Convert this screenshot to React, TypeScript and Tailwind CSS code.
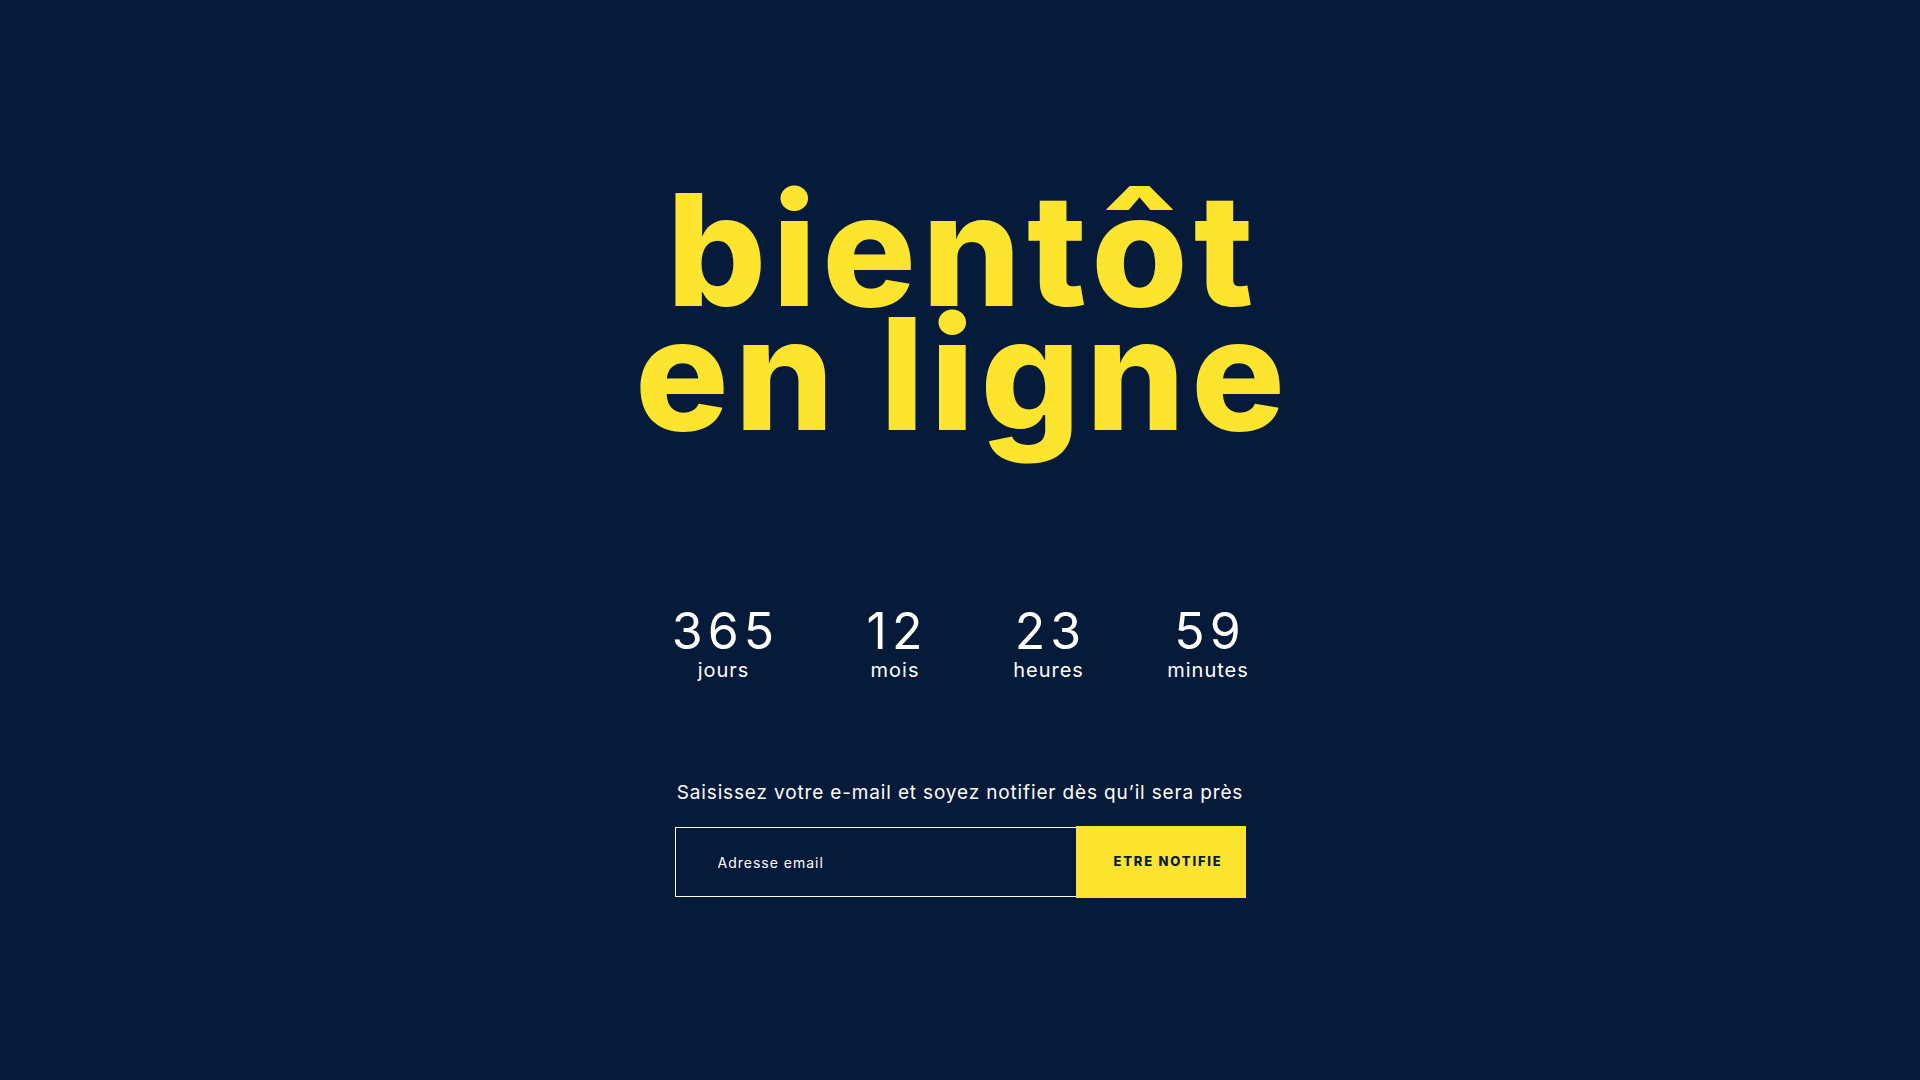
export default function App() {
  return (
    <main className="min-h-screen w-full bg-[#061a3a] font-['Inter',sans-serif] flex flex-col items-center pt-[188px]">
      <h1 className="pl-[6px] text-[156px] leading-[124px] font-extrabold tracking-[6px] text-[#fde42f] text-center">
        <span className="block">bientôt</span>
        <span className="block">en ligne</span>
      </h1>

      <div className="mt-[170px] flex flex-row text-white">
        <div className="w-[105px] flex flex-col items-center">
          <span className="pl-[5px] text-[50px] leading-[50px] font-normal tracking-[5px] whitespace-nowrap">365</span>
          <span className="mt-[4px] pl-[1px] text-[20px] leading-[20px] tracking-[1px] whitespace-nowrap">jours</span>
        </div>
        <div className="ml-[91px] w-[56px] flex flex-col items-center">
          <span className="pl-[5px] text-[50px] leading-[50px] font-normal tracking-[5px] whitespace-nowrap">12</span>
          <span className="mt-[4px] pl-[1px] text-[20px] leading-[20px] tracking-[1px] whitespace-nowrap">mois</span>
        </div>
        <div className="ml-[91px] w-[69px] flex flex-col items-center">
          <span className="pl-[5px] text-[50px] leading-[50px] font-normal tracking-[5px] whitespace-nowrap">23</span>
          <span className="mt-[4px] pl-[1px] text-[20px] leading-[20px] tracking-[1px] whitespace-nowrap">heures</span>
        </div>
        <div className="ml-[83px] w-[84px] flex flex-col items-center">
          <span className="pl-[5px] text-[50px] leading-[50px] font-normal tracking-[5px] whitespace-nowrap">59</span>
          <span className="mt-[4px] pl-[1px] text-[20px] leading-[20px] tracking-[1px] whitespace-nowrap">minutes</span>
        </div>
      </div>

      <p className="mt-[101px] text-[19px] leading-[24px] tracking-[0.85px] text-white whitespace-nowrap">
        Saisissez votre e-mail et soyez notifier dès qu’il sera près
      </p>

      <form className="mt-[21px] flex flex-row items-center" onSubmit={(e) => e.preventDefault()}>
        <input
          type="email"
          placeholder="Adresse email"
          className="w-[401px] h-[70px] border border-r-0 border-white bg-transparent pl-[42px] text-[14px] tracking-[1px] text-white placeholder:text-white outline-none"
        />
        <button
          type="submit"
          className="w-[170px] h-[72px] bg-[#fde42f] text-[#061a3a] text-[13px] font-extrabold tracking-[1.8px] text-left pl-[38px] whitespace-nowrap"
        >
          ETRE NOTIFIE
        </button>
      </form>
    </main>
  );
}
